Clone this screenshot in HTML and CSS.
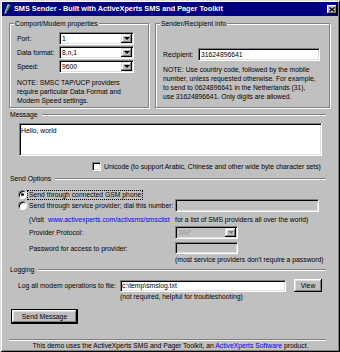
FILE: index.html
```html
<!DOCTYPE html>
<html>
<head>
<meta charset="utf-8">
<title>SMS Sender</title>
<link rel="stylesheet" href="styles.css">
</head>
<body>
<div class="window">
  <div class="titlebar">
    <svg class="app-icon" width="8" height="11" viewBox="0 0 8 11">
      <polygon points="5,0 8,1 4,8 2,7" fill="#3a9a3a"/>
      <polygon points="5,0 6,0.4 2.6,7.3 2,7" fill="#b8e0b8"/>
      <polygon points="2,7 4,8 1,11" fill="#c8c8c8"/>
      <polygon points="1,10 1.5,9 2.3,9.6 1,11" fill="#202020"/>
    </svg>
    <span class="title">SMS Sender - Built with ActiveXperts SMS and Pager Toolkit</span>
    <span class="close">
      <svg width="6" height="5" viewBox="0 0 6 5"><path d="M0.5 0.5 L5.5 4.5 M5.5 0.5 L0.5 4.5" stroke="#000" stroke-width="1.3" fill="none"/></svg>
    </span>
  </div>

  <div class="content">
    <div class="top-row">
      <fieldset class="group comport">
        <legend>Comport/Modem properties</legend>
        <div class="field-row"><span class="lbl">Port:</span><div class="combo"><span class="combo-text">1</span><span class="combo-btn"></span></div></div>
        <div class="field-row"><span class="lbl">Data format:</span><div class="combo"><span class="combo-text">8,n,1</span><span class="combo-btn"></span></div></div>
        <div class="field-row"><span class="lbl">Speed:</span><div class="combo"><span class="combo-text">9600</span><span class="combo-btn"></span></div></div>
        <p class="note comport-note">NOTE: SMSC TAP/UCP providers<br>require particular Data Format and<br>Modem Speed settings.</p>
      </fieldset>
      <fieldset class="group sender">
        <legend>Sender/Recipient info</legend>
        <div class="recipient-row"><span class="recipient-lbl">Recipient:</span><div class="edit recipient-edit">31624896641</div></div>
        <p class="note sender-note">NOTE: Use country code, followed by the mobile<br>number, unless requested otherwise. For example,<br>to send to 0624896641 in the Netherlands (31),<br>use 31624896641. Only digits are allowed.</p>
      </fieldset>
    </div>

    <div class="section-head head-message"><span>Message</span><i class="rule"></i></div>
    <div class="textarea">Hello, world</div>
    <div class="unicode-row"><span class="check"></span><span class="unicode-text">Unicode (to support Arabic, Chinese and other wide byte character sets)</span></div>

    <div class="section-head head-send"><span>Send Options</span><i class="rule"></i></div>
    <div class="options">
      <div class="opt-row row-gsm">
        <span class="radio checked"></span><span class="focus-label">Send through connected GSM phone</span>
      </div>
      <div class="opt-row row-provider">
        <div class="col1"><span class="radio"></span><span class="radio-text">Send through service provider; dial this number:</span></div>
        <div class="edit disabled dial-edit"></div>
      </div>
      <div class="opt-row row-visit">
        <div class="col1 indent"><span class="visit">(Visit</span><a class="link">www.activexperts.com/activsms/smsclist</a></div>
        <span>for a list of SMS providers all over the world)</span>
      </div>
      <div class="opt-row row-protocol">
        <div class="col1 indent">Provider Protocol:</div>
        <div class="combo disabled tap-combo"><span class="combo-text">TAP</span><span class="combo-btn"></span></div>
      </div>
      <div class="opt-row row-password">
        <div class="col1 indent">Password for access to provider:</div>
        <div class="edit disabled pass-edit"></div>
      </div>
      <div class="opt-row row-hint">
        <div class="col1"></div>
        <span>(most service providers don't require a password)</span>
      </div>
    </div>

    <div class="section-head head-logging"><span>Logging</span><i class="rule"></i></div>
    <div class="log-row">
      <span class="log-lbl">Log all modem operations to file:</span>
      <div class="log-col">
        <div class="edit log-edit">c:\temp\smslog.txt</div>
        <span class="log-hint">(not required, helpful for troubleshooting)</span>
      </div>
      <span class="btn view-btn">View</span>
    </div>

    <span class="btn default send-btn">Send Message</span>
    <div class="separator"></div>
    <p class="footer">This demo uses the ActiveXperts SMS and Pager Toolkit, an <a class="link">ActiveXperts Software</a> product.</p>
  </div>
</div>
</body>
</html>
```

FILE: styles.css
```css
* { box-sizing: border-box; }

html, body {
  margin: 0;
  padding: 0;
}

body {
  width: 340px;
  height: 352px;
  overflow: hidden;
  background: #c0c0c0;
  font-family: "Liberation Sans", Arial, sans-serif;
  font-size: 6.8px;
  line-height: 9px;
  color: #000;
}

.window {
  width: 340px;
  height: 352px;
  padding: 2px;
  background: #c0c0c0;
  box-shadow: inset 1px 1px 0 #dfdfdf, inset -1px -1px 0 #000,
              inset 2px 2px 0 #fff, inset -2px -2px 0 #808080;
  display: flex;
  flex-direction: column;
}

/* Title bar */
.titlebar {
  height: 14px;
  flex-shrink: 0;
  background: #000080;
  color: #fff;
  display: flex;
  align-items: center;
}

.app-icon {
  margin-left: 1px;
  flex-shrink: 0;
}

.title {
  margin-left: 3px;
  flex: 1;
  font-weight: bold;
  font-size: 7.3px;
  line-height: 14px;
  white-space: nowrap;
}

.close {
  width: 10px;
  height: 9px;
  margin-right: 1px;
  background: #c0c0c0;
  box-shadow: inset -1px -1px 0 #000, inset 1px 1px 0 #fff, inset -2px -2px 0 #808080;
  display: flex;
  align-items: center;
  justify-content: center;
}

/* Content */
.content {
  flex: 1;
  padding: 0 6px 0 7px;
  display: flex;
  flex-direction: column;
}

.top-row {
  display: flex;
  gap: 6px;
  margin-top: 3px;
  height: 89px;
  flex-shrink: 0;
}

.group {
  margin: 0;
  min-width: 0;
  border: 1px solid #808080;
  box-shadow: 1px 1px 0 #fff, inset 1px 1px 0 #fff;
}

.group legend {
  padding: 0 1px;
  margin-left: -3px;
  background: #c0c0c0;
  line-height: 9px;
  white-space: nowrap;
}

.comport {
  width: 140px;
  padding: 4px 4px 0 7px;
}

.sender {
  width: 175px;
  padding: 0 4px 0 7px;
}

.field-row {
  display: flex;
  align-items: center;
  height: 13px;
  margin-bottom: 1px;
}

.field-row .lbl {
  width: 42px;
  white-space: nowrap;
}

.note {
  margin: 0;
  white-space: nowrap;
}

.comport-note { margin-top: 5px; }

.recipient-row {
  display: flex;
  align-items: center;
  height: 12px;
  margin-top: 20px;
}

.recipient-lbl { width: 35px; }

.recipient-edit {
  width: 122px;
  height: 12px;
  padding: 0 1px;
  line-height: 10px;
}

.sender-note { margin-top: 5px; }

/* Sunken controls */
.combo {
  width: 75px;
  height: 13px;
  display: flex;
  background: #fff;
  border: 1px solid;
  border-color: #808080 #fff #fff #808080;
  box-shadow: inset 1px 1px 0 #000, inset -1px -1px 0 #dfdfdf;
  padding: 1px;
}

.combo-text {
  flex: 1;
  padding-left: 1px;
  line-height: 9px;
  white-space: nowrap;
}

.combo-btn {
  width: 11px;
  height: 9px;
  background: #c0c0c0;
  box-shadow: inset -1px -1px 0 #000, inset 1px 1px 0 #dfdfdf,
              inset -2px -2px 0 #808080, inset 2px 2px 0 #fff;
  display: flex;
  align-items: center;
  justify-content: center;
}

.combo-btn::after {
  content: "";
  width: 0;
  height: 0;
  border-left: 3px solid transparent;
  border-right: 3px solid transparent;
  border-top: 3px solid #000;
}

.combo.disabled { background: #c0c0c0; }
.combo.disabled .combo-text { color: #9a9a9a; }
.combo.disabled .combo-btn::after { border-top-color: #808080; }

.edit {
  height: 13px;
  background: #fff;
  border: 1px solid;
  border-color: #808080 #fff #fff #808080;
  box-shadow: inset 1px 1px 0 #000, inset -1px -1px 0 #dfdfdf;
  padding: 0 2px;
  line-height: 11px;
  white-space: nowrap;
  overflow: hidden;
}

.edit.disabled { background: #c0c0c0; }

/* Section headers */
.section-head {
  display: flex;
  align-items: center;
  height: 9px;
  padding-left: 1px;
  margin-right: 6px;
  flex-shrink: 0;
  white-space: nowrap;
}

.section-head .rule {
  flex: 1;
  height: 2px;
  margin-left: 4px;
  border-top: 1px solid #808080;
  border-bottom: 1px solid #fff;
}

.head-message { margin-top: 2px; }
.head-send { margin-top: 3px; }
.head-logging { margin-top: 1px; }

.textarea {
  margin: 4px 0 0 10px;
  width: 303px;
  height: 33px;
  flex-shrink: 0;
  background: #fff;
  border: 1px solid;
  border-color: #808080 #fff #fff #808080;
  box-shadow: inset 1px 1px 0 #000, inset -1px -1px 0 #dfdfdf;
  padding: 2px 1px;
}

.unicode-row {
  display: flex;
  align-items: center;
  height: 9px;
  margin-top: 6px;
  padding-left: 83px;
  white-space: nowrap;
}

.check {
  width: 9px;
  height: 9px;
  background: #fff;
  border: 1px solid;
  border-color: #808080 #fff #fff #808080;
  box-shadow: inset 1px 1px 0 #000, inset -1px -1px 0 #dfdfdf;
}

.unicode-text { margin-left: 3px; }

/* Send options */
.options {
  display: flex;
  flex-direction: column;
  padding-left: 9px;
}

.opt-row {
  display: flex;
  align-items: center;
  white-space: nowrap;
}

.col1 {
  width: 157px;
  flex-shrink: 0;
  display: flex;
  align-items: center;
}

.col1.indent { padding-left: 11px; }

.radio {
  width: 9px;
  height: 9px;
  flex-shrink: 0;
  border-radius: 50%;
  background: #fff;
  border: 1px solid;
  border-color: #808080 #fff #fff #808080;
  box-shadow: inset 1px 1px 0 #000;
  display: flex;
  align-items: center;
  justify-content: center;
}

.radio.checked::after {
  content: "";
  width: 3px;
  height: 3px;
  border-radius: 50%;
  background: #000;
}

.row-gsm { height: 9px; margin-top: 7px; }

.focus-label {
  margin-left: 1px;
  padding: 0 1px;
  line-height: 8px;
  outline: 1px dotted #000;
}

.radio-text { margin-left: 2px; }

.row-provider { height: 13px; }
.dial-edit { width: 144px; }

.row-visit { height: 9px; margin-top: 3px; }
.visit { width: 19px; }

.link { color: #0000ff; text-decoration: none; }

.row-protocol { height: 13px; margin-top: 2px; }
.tap-combo { width: 63px; }

.row-password { height: 12px; margin-top: 3px; }
.pass-edit { width: 63px; height: 12px; }

.row-hint { height: 9px; margin-top: 1px; }

/* Logging */
.log-row {
  display: flex;
  align-items: flex-start;
  margin-top: 5px;
  padding-left: 9px;
  white-space: nowrap;
}

.log-lbl {
  width: 102px;
  margin-top: 2px;
}

.log-col {
  display: flex;
  flex-direction: column;
  width: 166px;
}

.log-edit {
  width: 166px;
  height: 12px;
  margin-top: 1px;
  padding: 0 1px;
  line-height: 10px;
}

.log-hint { line-height: 9px; }

.btn {
  display: flex;
  align-items: center;
  justify-content: center;
  background: #c0c0c0;
  box-shadow: inset -1px -1px 0 #000, inset 1px 1px 0 #fff,
              inset -2px -2px 0 #808080, inset 2px 2px 0 #dfdfdf;
  white-space: nowrap;
}

.view-btn {
  width: 28px;
  height: 13px;
  margin-left: 8px;
}

.send-btn {
  width: 67px;
  height: 15px;
  margin: 8px 0 0 2px;
  flex-shrink: 0;
}

.btn.default {
  border: 1px solid #000;
}

.separator {
  height: 2px;
  margin: 15px 6px 0 0;
  flex-shrink: 0;
  border-top: 1px solid #808080;
  border-bottom: 1px solid #fff;
}

.footer {
  margin: 1px 0 0 0;
  line-height: 8px;
  text-align: center;
  white-space: nowrap;
}
```
